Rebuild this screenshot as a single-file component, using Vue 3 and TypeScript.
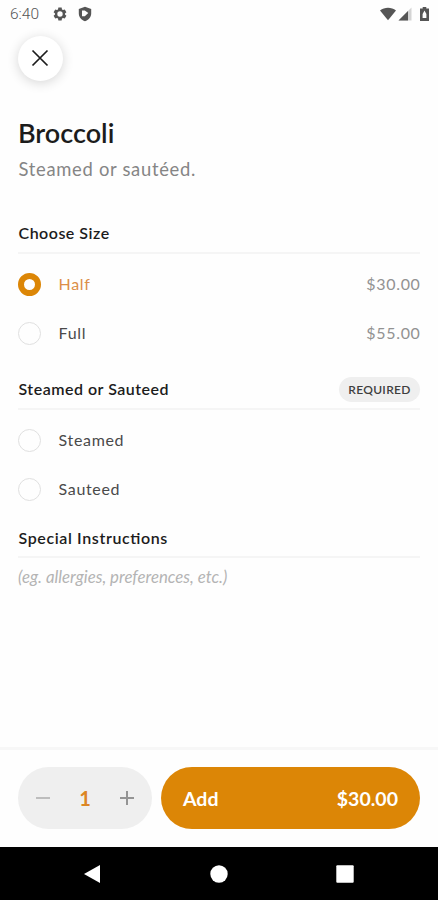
<script setup lang="ts">
import { ref, computed } from 'vue'

interface Option {
  label: string
  price?: number
}

const sizes: Option[] = [
  { label: 'Half', price: 30 },
  { label: 'Full', price: 55 },
]
const styles: Option[] = [{ label: 'Steamed' }, { label: 'Sauteed' }]

const size = ref(0)
const style = ref(-1)
const quantity = ref(1)
const notes = ref('')

const money = (n: number) => '$' + n.toFixed(2)
const total = computed(() => money((sizes[size.value].price ?? 0) * quantity.value))
</script>

<template>
  <div class="screen">
    <header class="status">
      <span class="clock">6:40</span>
      <svg class="gear" width="14" height="14" viewBox="0 0 24 24">
        <path fill-rule="evenodd" d="M9.2 1h5.6l.6 3.2 1.8 1 3-1.1 2.8 4.8-2.5 2.1v2l2.5 2.1-2.8 4.8-3-1.1-1.8 1-.6 3.2H9.200l-.6-3.200-1.800-1-3 1.100L1 15.100 3.500 13v-2L1 8.900l2.800-4.800 3 1.100 1.800-1zM12 7.400a4.600 4.600 0 1 0 0 9.200 4.600 4.600 0 0 0 0-9.200z" />
      </svg>
      <svg class="shield" width="14" height="16" viewBox="0 0 14 16">
        <path fill-rule="evenodd" d="M7 .8 13.200 3v4.500c0 3.500-2.600 6.500-6.200 7.700C3.400 14 .8 11 .8 7.500V3zM4 4.500v5.800h2.800L10.300 7 6.800 4.500z" />
      </svg>
      <span class="grow"></span>
      <svg class="wifi" width="16" height="14" viewBox="0 0 16 14">
        <path d="M0 3.500C4.500-.3 11.500-.3 16 3.500L8 13.300z" />
      </svg>
      <svg class="signal" width="14" height="14" viewBox="0 0 14 14">
        <path class="faint" d="M13.500.5v13H.5z" />
        <path d="M10 4v9.500H.5z" />
      </svg>
      <svg class="battery" width="9" height="14" viewBox="0 0 9 14">
        <path fill-rule="evenodd" d="M2.700 0h3.600v1.400H9V14H0V1.400h2.700zM4.500 3.500 2.600 7v4h3.800V7z" />
      </svg>
    </header>

    <button class="close" aria-label="Close">
      <svg width="18" height="18" viewBox="0 0 18 18">
        <path d="M1.500 1.500l15 15M16.500 1.500l-15 15" />
      </svg>
    </button>

    <main class="content">
      <h1>Broccoli</h1>
      <p class="desc">Steamed or sautéed.</p>

      <section class="sizes">
        <div class="heading"><h2>Choose Size</h2></div>
        <ul>
          <li v-for="(o, i) in sizes" :key="o.label" :class="{ on: size === i }" @click="size = i">
            <span class="radio"></span>
            <span class="label">{{ o.label }}</span>
            <span class="price">{{ money(o.price ?? 0) }}</span>
          </li>
        </ul>
      </section>

      <section class="styles">
        <div class="heading">
          <h2>Steamed or Sauteed</h2>
          <span class="badge">REQUIRED</span>
        </div>
        <ul>
          <li v-for="(o, i) in styles" :key="o.label" :class="{ on: style === i }" @click="style = i">
            <span class="radio"></span>
            <span class="label">{{ o.label }}</span>
          </li>
        </ul>
      </section>

      <section class="notes">
        <div class="heading"><h2 class="special">Special Instructions</h2></div>
        <input v-model="notes" placeholder="(eg. allergies, preferences, etc.)" />
      </section>
    </main>

    <footer class="actions">
      <div class="stepper">
        <button class="minus" aria-label="Decrease" @click="quantity = Math.max(1, quantity - 1)">
          <svg width="14" height="14" viewBox="0 0 14 14"><path d="M0 7h14" /></svg>
        </button>
        <span class="count">{{ quantity }}</span>
        <button class="plus" aria-label="Increase" @click="quantity++">
          <svg width="14" height="14" viewBox="0 0 14 14"><path d="M0 7h14M7 0v14" /></svg>
        </button>
      </div>
      <button class="add"><span>Add</span><span class="total">{{ total }}</span></button>
    </footer>

    <nav class="system">
      <svg width="18" height="20" viewBox="0 0 18 20"><path d="M17 1v18L1 10z" /></svg>
      <svg width="18" height="18" viewBox="0 0 18 18"><circle cx="9" cy="9" r="8.700" /></svg>
      <svg width="18" height="18" viewBox="0 0 18 18"><rect x=".3" y=".3" width="17.400" height="17.400" rx="1" /></svg>
    </nav>
  </div>
</template>

<style>
body {
  background: #fefefe;
}
</style>

<style scoped>
.screen {
  box-sizing: border-box;
  width: 438px;
  height: 900px;
  display: flex;
  flex-direction: column;
  overflow: hidden;
  background: #fefefe;
  color: #1c1c1c;
  font-family: Lato, 'Open Sans', sans-serif;
}
button {
  border: 0;
  padding: 0;
  background: none;
  font: inherit;
}
svg {
  display: block;
  flex: none;
}
h1,
h2,
p,
ul {
  margin: 0;
  padding: 0;
}
.status {
  height: 28px;
  padding: 0 9px 0 10px;
  display: flex;
  align-items: center;
  fill: #555;
}
.clock {
  width: 43px;
  font: 300 15.500px/28px Roboto, sans-serif;
  color: #555;
}
.shield {
  margin-left: 11px;
}
.grow {
  flex: 1;
}
.signal {
  margin-left: 2px;
}
.faint {
  fill: #d4d4d4;
}
.battery {
  margin-left: 8px;
}
.close {
  flex: none;
  box-sizing: border-box;
  width: 45px;
  height: 45px;
  margin: 8px 0 0 18px;
  padding: 0 1px 1px 0;
  border-radius: 50%;
  display: flex;
  align-items: center;
  justify-content: center;
  background: #fff;
  box-shadow: 0 2px 12px rgba(0, 0, 0, 0.16);
}
.close path {
  stroke: #1c1c1c;
  stroke-width: 1.700;
}
.content {
  flex: 1;
  padding: 34px 18px 0;
}
h1 {
  font-size: 27px;
  line-height: 36px;
  font-weight: 600;
}
.desc {
  margin-top: 6px;
  padding-left: 0.500px;
  font-size: 18.400px;
  line-height: 24px;
  letter-spacing: 0.700px;
  color: #858585;
}
.heading {
  box-sizing: border-box;
  height: 40px;
  display: flex;
  align-items: center;
  justify-content: space-between;
  border-bottom: 2px solid #f5f5f5;
}
.sizes {
  margin-top: 33px;
}
.styles {
  margin-top: 12px;
}
.notes {
  margin-top: 4px;
}
h2 {
  padding-left: 0.500px;
  font-size: 16px;
  line-height: 24px;
  font-weight: 600;
  letter-spacing: 0.500px;
}
.special {
  padding-top: 1px;
  letter-spacing: 0.620px;
  font-feature-settings: 'liga' 1;
}
ul {
  list-style: none;
  padding-top: 6px;
}
li {
  height: 49px;
  display: flex;
  align-items: center;
  font-size: 16px;
  letter-spacing: 0.680px;
  color: #4a4a4a;
}
.radio {
  box-sizing: border-box;
  width: 23px;
  height: 23px;
  border: 1.500px solid #e0e0e0;
  border-radius: 50%;
}
.label {
  margin-left: 17.500px;
  flex: 1;
}
.label,
.price {
  padding-bottom: 2px;
}
.price {
  margin-right: -0.600px;
  color: #929292;
}
.on .radio {
  border: 6px solid #dc8606;
}
.on .label {
  color: #dc8e48;
}
.badge {
  height: 25px;
  width: 81px;
  border-radius: 13px;
  background: #efefef;
  color: #3e3e3e;
  font-size: 12px;
  line-height: 25px;
  font-weight: 600;
  letter-spacing: 0.300px;
  text-align: center;
}
input {
  display: block;
  box-sizing: border-box;
  width: 100%;
  height: 38px;
  border: 0;
  outline: 0;
  padding: 0;
  background: transparent;
  font: italic 16.800px/38px Lato, sans-serif;
}
input::placeholder {
  color: #b4b4b4;
}
.actions {
  flex: none;
  box-sizing: border-box;
  height: 100px;
  border-top: 3px solid #f7f7f7;
  padding: 17px 18px 18px;
  display: flex;
  gap: 9px;
}
.stepper {
  box-sizing: border-box;
  width: 134px;
  height: 62px;
  border-radius: 31px;
  padding: 0 18px;
  background: #efefef;
  display: flex;
  align-items: center;
  justify-content: space-between;
}
.stepper path {
  stroke-width: 2;
}
.minus path {
  stroke: #bdbdbd;
}
.plus path {
  stroke: #949494;
}
.count {
  font-size: 20px;
  font-weight: 700;
  color: #dc8625;
}
.add {
  flex: 1;
  height: 62px;
  border-radius: 31px;
  padding: 0 22px;
  display: flex;
  align-items: center;
  justify-content: space-between;
  background: #dc8606;
  color: #fff;
  font-size: 19.500px;
  font-weight: 700;
}
.system {
  flex: none;
  height: 53px;
  padding: 0 84px 0 83px;
  background: #000;
  display: flex;
  align-items: center;
  justify-content: space-between;
  fill: #fff;
}
</style>
